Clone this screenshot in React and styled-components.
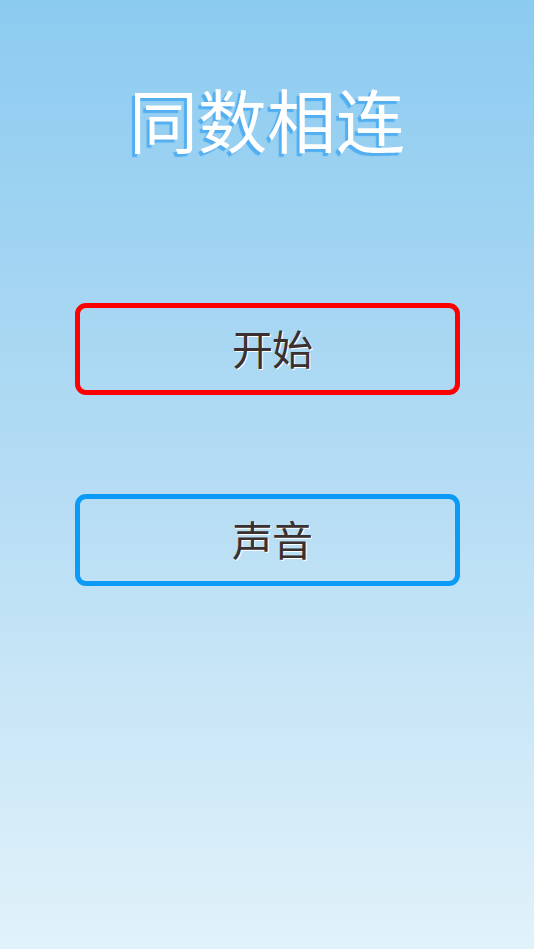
import React from 'react';
import styled, { createGlobalStyle } from 'styled-components';

const GlobalStyle = createGlobalStyle`
  html, body {
    margin: 0;
    padding: 0;
    height: 100%;
  }
  #root {
    height: 100%;
  }
`;

// full screen with sky gradient
const Screen = styled.div`
  width: 100vw;
  height: 100vh;
  background: linear-gradient(to bottom, #8ccbf0 0%, #b4dcf4 50%, #e1f2fa 100%);
  display: flex;
  flex-direction: column;
  align-items: center;
  font-family: "Noto Sans CJK SC", "Noto Sans", sans-serif;
`;

const Title = styled.h1`
  margin: 81px 0 0;
  font-size: 69px;
  line-height: 74px;
  font-weight: 400;
  color: #ffffff;
  text-shadow: -3px 3px 1px #52aef0;
`;

const Menu = styled.div`
  margin-top: 148px;
  display: flex;
  flex-direction: column;
  gap: 99px;
`;

const MenuButton = styled.button`
  box-sizing: border-box;
  width: 385px;
  height: 92px;
  border: 5px solid ${(props) => props.color};
  border-radius: 11px;
  background: transparent;
  padding: 0 0 4px 10px;
  font-family: "Noto Sans CJK SC", "Noto Sans", sans-serif;
  font-size: 41px;
  letter-spacing: -1px;
  color: #3a3030;
  text-shadow: 1px 1px 0 #ffffff;
  cursor: pointer;
  display: flex;
  align-items: center;
  justify-content: center;
`;

const App = () => {
  return (
    <Screen>
      <GlobalStyle />
      <Title>同数相连</Title>
      <Menu>
        <MenuButton color="#ff0000">开始</MenuButton>
        <MenuButton color="#0b9af6">声音</MenuButton>
      </Menu>
    </Screen>
  );
};

export default App;
